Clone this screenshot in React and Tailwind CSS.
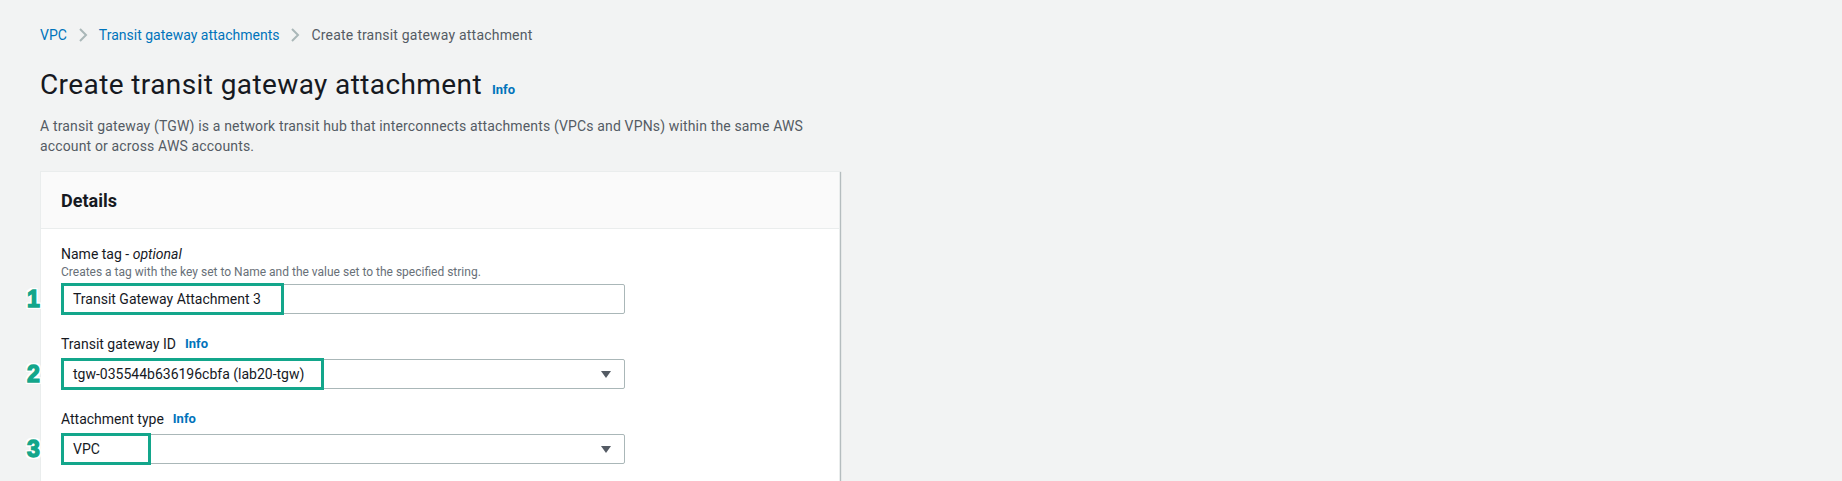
import React from 'react';

function Marker({ n }) {
    return (
        <span className="absolute left-[-34px] top-1/2 -translate-y-1/2 font-['Liberation_Sans',sans-serif] font-bold text-[23px] leading-none text-[#13a68b] [-webkit-text-stroke:1.4px_#13a68b] [text-shadow:-2px_0_white,2px_0_white,0_-2px_white,0_2px_white,-2px_-2px_white,2px_2px_white,-2px_2px_white,2px_-2px_white]">
            {n}
        </span>
    );
}

function Highlight({ width }) {
    return <div className={`absolute left-0 top-[-1px] h-[32px] border-[3px] border-[#13a68b] pointer-events-none ${width}`} />;
}

function Caret() {
    return (
        <svg width="10" height="7" viewBox="0 0 10 7" className="shrink-0">
            <path d="M0 0h10L5 7z" fill="#545b64" />
        </svg>
    );
}

function Chevron() {
    return (
        <svg width="10" height="16" viewBox="0 0 10 16" className="mx-[11px] shrink-0">
            <path d="M2 2l6 6-6 6" fill="none" stroke="#aab7b8" strokeWidth="2" />
        </svg>
    );
}

export default function App() {
    return (
        <div className="w-full h-[481px] overflow-hidden bg-[#f2f3f3] font-['Roboto',sans-serif] text-[#16191f]">
            <div className="pl-10 pt-[25px]">
                {/* Breadcrumb */}
                <nav className="flex items-center h-5 text-[14px]">
                    <span className="text-[#0073bb]">VPC</span>
                    <Chevron />
                    <span className="text-[#0073bb]">Transit gateway attachments</span>
                    <Chevron />
                    <span className="text-[#545b64] tracking-[0.2px]">Create transit gateway attachment</span>
                </nav>

                {/* Header */}
                <div className="mt-[22px] flex items-baseline h-9">
                    <h1 className="text-[28px] leading-9 font-normal tracking-[0.4px]">Create transit gateway attachment</h1>
                    <span className="ml-[10px] text-[13px] font-bold text-[#0073bb]">Info</span>
                </div>
                <p className="mt-[13px] max-w-[775px] text-[14px] leading-5 tracking-[0.15px] text-[#545b64]">
                    A transit gateway (TGW) is a network transit hub that interconnects attachments (VPCs and VPNs) within the same AWS account or across AWS accounts.
                </p>

                {/* Details card */}
                <div className="mt-[15px] w-[800px] bg-white border border-[#eaeded] shadow-[1px_1px_1px_0_rgba(0,28,36,0.25)]">
                    <div className="h-[57px] flex items-center px-5 bg-[#fafafa] border-b border-[#eaeded]">
                        <h2 className="text-[18px] font-bold">Details</h2>
                    </div>
                    <div className="px-5 pt-[15px] pb-10">
                        <label className="block text-[14px] leading-5">
                            Name tag - <i>optional</i>
                        </label>
                        <p className="text-[12px] leading-4 text-[#687078]">
                            Creates a tag with the key set to Name and the value set to the specified string.
                        </p>
                        <div className="relative mt-1 w-[564px]">
                            <div className="h-[30px] flex items-center pl-[11px] border border-[#aab7b8] rounded-[2px] text-[14px]">
                                Transit Gateway Attachment 3
                            </div>
                            <Highlight width="w-[223px]" />
                            <Marker n="1" />
                        </div>

                        <div className="mt-5 flex items-center h-5 text-[14px]">
                            Transit gateway ID
                            <span className="ml-[9px] text-[13px] font-bold text-[#0073bb]">Info</span>
                        </div>
                        <div className="relative mt-[5px] w-[564px]">
                            <div className="h-[30px] flex items-center justify-between pl-[11px] pr-[13px] border border-[#aab7b8] rounded-[2px] text-[14px]">
                                tgw-035544b636196cbfa (lab20-tgw)
                                <Caret />
                            </div>
                            <Highlight width="w-[263px]" />
                            <Marker n="2" />
                        </div>

                        <div className="mt-5 flex items-center h-5 text-[14px]">
                            Attachment type
                            <span className="ml-[9px] text-[13px] font-bold text-[#0073bb]">Info</span>
                        </div>
                        <div className="relative mt-[5px] w-[564px]">
                            <div className="h-[30px] flex items-center justify-between pl-[11px] pr-[13px] border border-[#aab7b8] rounded-[2px] text-[14px]">
                                VPC
                                <Caret />
                            </div>
                            <Highlight width="w-[90px]" />
                            <Marker n="3" />
                        </div>
                    </div>
                </div>
            </div>
        </div>
    );
}
